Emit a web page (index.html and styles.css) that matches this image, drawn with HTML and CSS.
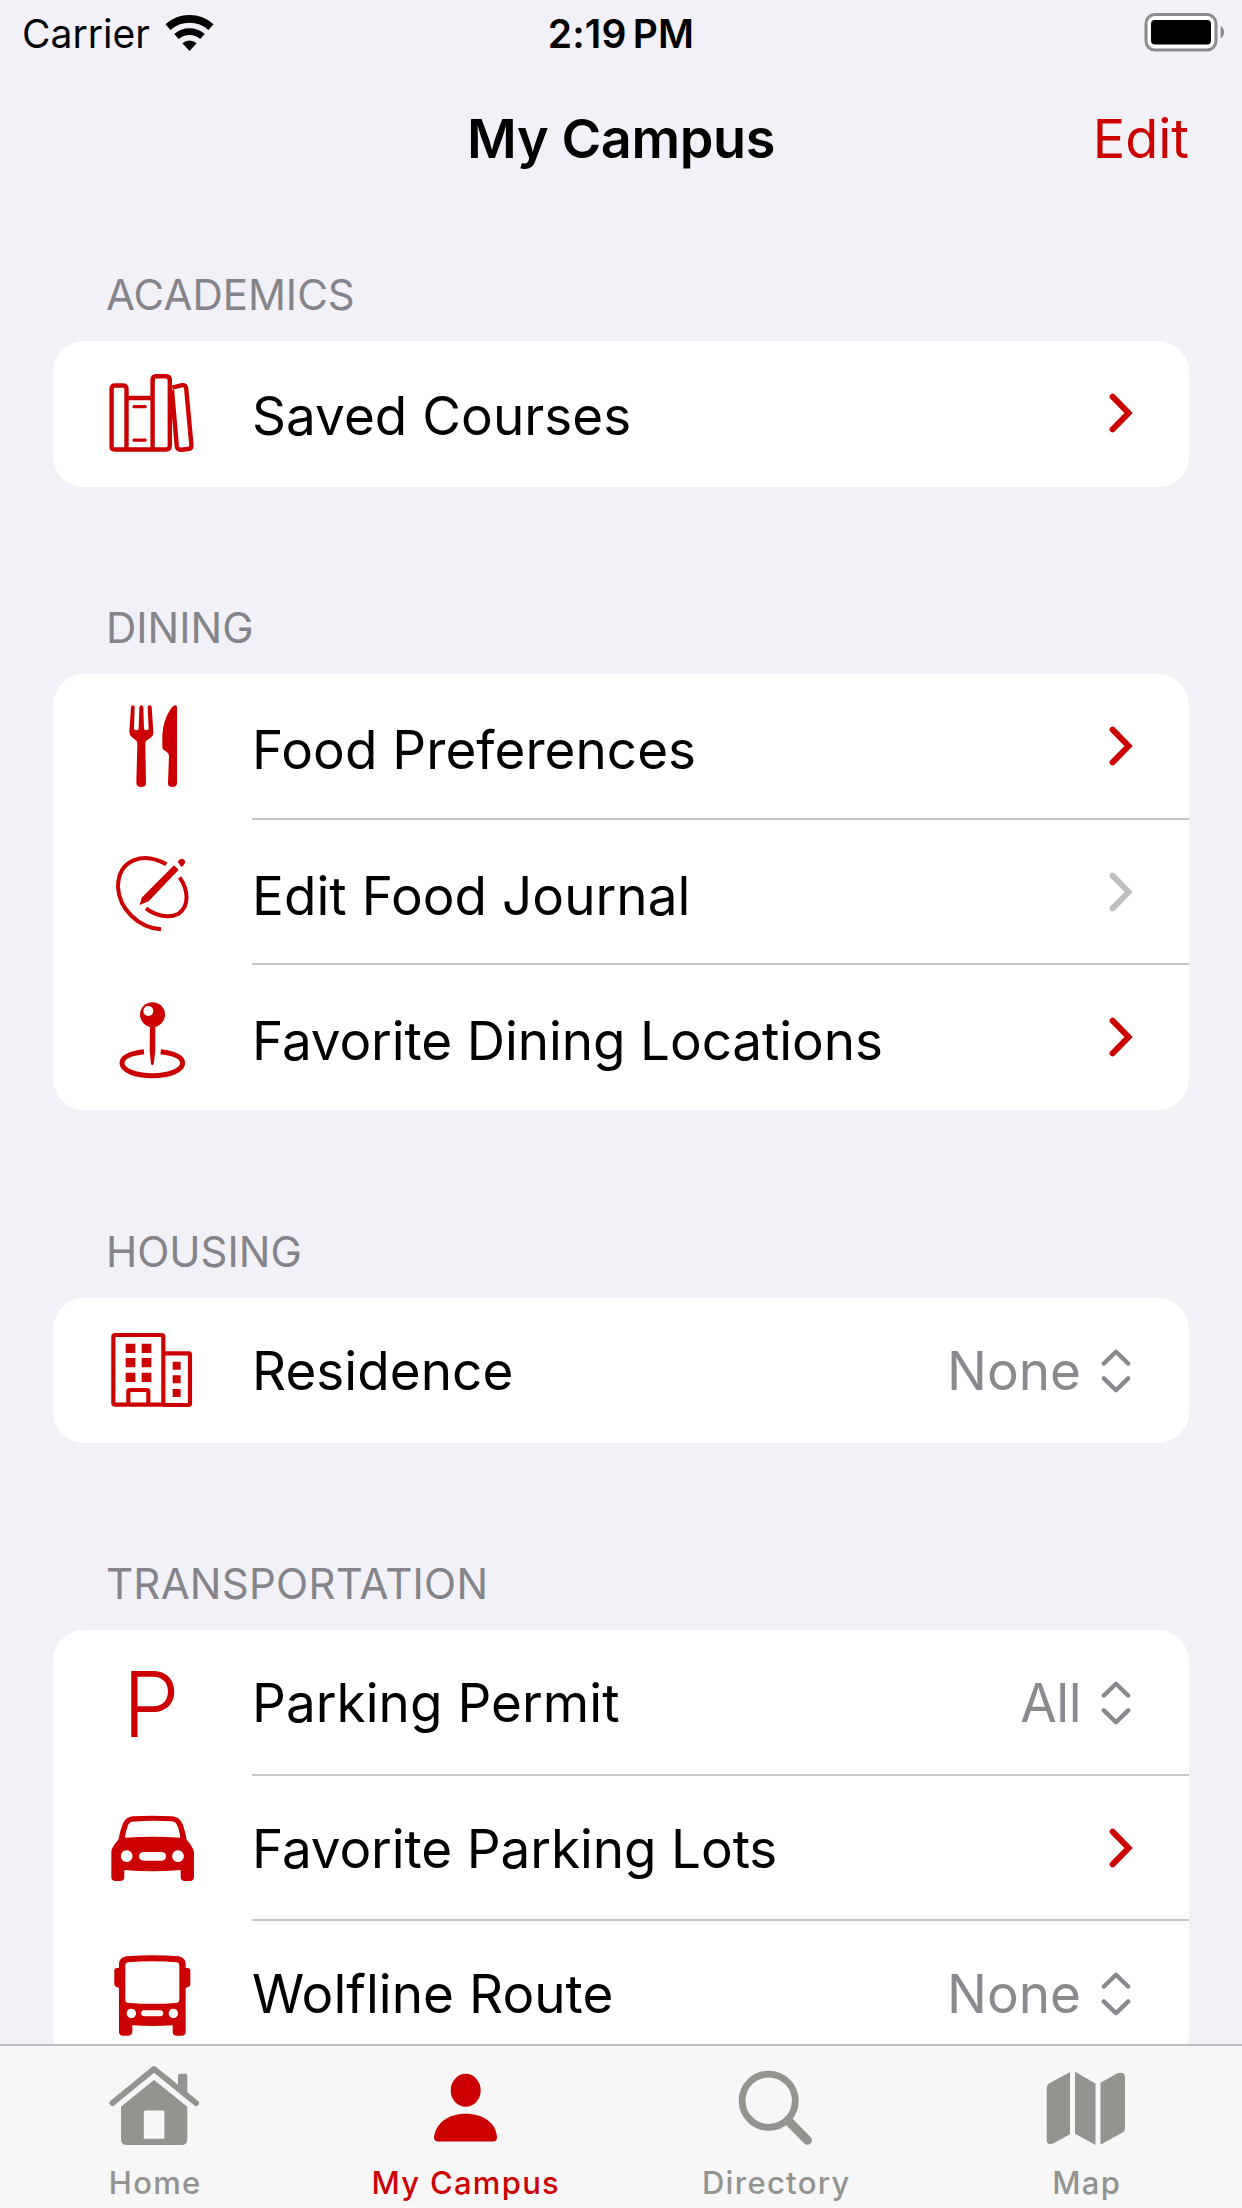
FILE: index.html
```html
<!DOCTYPE html>
<html lang="en">
<head>
<meta charset="utf-8">
<title>My Campus</title>
<link rel="stylesheet" href="styles.css">
</head>
<body>
<svg class="defs" width="0" height="0" aria-hidden="true">
  <symbol id="chevron" viewBox="0 0 24 42"><path d="M3.6 4.6 19.6 21 3.6 37.4" fill="none" stroke="currentColor" stroke-width="6" stroke-linecap="round" stroke-linejoin="miter"/></symbol>
  <symbol id="updown" viewBox="0 0 30 46"><path d="M2.8 15.6 15 3.8l12.200 11.800M2.800 30.400 15 42.200l12.200-11.800" fill="none" stroke="currentColor" stroke-width="4.300" stroke-linecap="round" stroke-linejoin="round"/></symbol>
</svg>
<div class="app">
  <header class="status">
    <div class="status-left">
      <span class="carrier">Carrier</span>
      <svg class="wifi" viewBox="164 14 52 38">
        <g fill="none" stroke="#000"><path d="M168 27.1A32.2 32.2 0 0 1 211 27.1" stroke-width="7.6"/><path d="M176.5 36.5A19.5 19.5 0 0 1 202.5 36.5" stroke-width="6.8"/></g>
        <path d="M182.4 43.3A10.3 10.3 0 0 1 196.6 43.3L189.5 51Z"/>
      </svg>
    </div>
    <time class="clock">2:19 PM</time>
    <svg class="battery" viewBox="1144 12 82 40">
      <rect x="1146" y="14.5" width="70" height="35.5" rx="9" fill="#fff" stroke="#8b8b8e" stroke-width="3"/>
      <rect x="1151" y="20" width="60" height="24.5" rx="4"/>
      <path d="M1220.7 26Q1224 28 1224 32.2T1220.7 38.4Z" fill="#8b8b8e"/>
    </svg>
  </header>
  <nav class="navbar">
    <h1 class="title">My Campus</h1>
    <a class="edit">Edit</a>
  </nav>
  <main class="content">
    <section class="group">
      <h2 class="heading">ACADEMICS</h2>
      <div class="card card-academics">
        <div class="row">
          <svg class="icon" viewBox="108 371 90 90"><g fill="none" stroke="currentColor" stroke-width="4.400">
            <path d="M126.5 449.5H114.5Q111.6 449.5 111.6 446.5V389Q111.6 385.5 115 385.5H123Q126.5 385.5 126.5 389ZM126.5 398H152.6M126.5 449.5H152.6V380.5Q152.6 376.3 156 376.3H166Q169.8 376.3 169.8 380.5V445.5Q169.8 449.5 166 449.5H152.6"/>
            <path d="M172.300 387.6 182 385.2Q185.800 384.8 186.200 388.5L191.400 445Q191.600 448.6 188 449L181 449.8Q177.4 450 176.8 446.5L172 390"/>
            <path d="M134 406.7H145.2M134 440.2H145.2" stroke-width="3.200" stroke-linecap="round"/></g></svg>
          <span class="label">Saved Courses</span><svg class="chevron"><use href="#chevron"/></svg>
        </div>
      </div>
    </section>
    <section class="group">
      <h2 class="heading">DINING</h2>
      <div class="card card-dining">
        <div class="row">
          <svg class="icon" viewBox="204 312 270 270" fill="currentColor">
            <path d="M273 321Q274 316 279 316T284 321L282 386Q284 391 290 391 296 390 296 386L298 321Q299 316 304 316T310 321L312 386Q313 390 319 391 325 391 326 386L323 321Q323 316 329 316T335 321L340 395Q341 406 334 412 324 418 318 423 316 427 316 433L318 548Q318 561 304 561T289 548L292 433Q292 426 290 423L276 412Q268 406 268 396Z"/>
            <path d="M405 316Q411 316 411 322V548Q411 561 397 561T384 548L387 468Q387 461 380 456L369 448Q367 446 367 438V404Q370 364 386 337 396 318 405 316Z"/></svg>
          <span class="label">Food Preferences</span><svg class="chevron"><use href="#chevron"/></svg>
        </div>
        <div class="row divided">
          <svg class="icon" viewBox="204 750 270 270"><g fill="none" stroke="currentColor" stroke-width="12"><path d="M379 793C311 754 234 777 234 862 238 928 296 983 363 988M419 832C447 872 447 919 416 941 382 958 343 944 318 925"/></g>
            <path d="M402 796 416 809 326 904 299 915 305 893Z" fill="currentColor"/><path d="M413 785Q424 769 435 782 438 791 424 801Z" fill="currentColor"/></svg>
          <span class="label">Edit Food Journal</span><svg class="chevron muted"><use href="#chevron"/></svg>
        </div>
        <div class="row divided">
          <svg class="icon" viewBox="204 1185 270 270"><circle cx="337.500" cy="1244" r="37.500" fill="currentColor"/><circle cx="325" cy="1233" r="15" fill="#fff"/>
            <path d="M330 1278H346V1352L341 1392Q337 1400 333 1392L329 1352Z" fill="currentColor"/>
            <path d="M312 1355C270 1360 246 1372 246 1389 246 1411 286 1427 337 1427S428 1411 428 1389C428 1372 404 1360 362 1355" fill="none" stroke="currentColor" stroke-width="15"/></svg>
          <span class="label label-tight">Favorite Dining Locations</span><svg class="chevron"><use href="#chevron"/></svg>
        </div>
      </div>
    </section>
    <section class="group group-housing">
      <h2 class="heading">HOUSING</h2>
      <div class="card card-housing">
        <div class="row picker">
          <svg class="icon" viewBox="204 324 270 270"><g fill="none" stroke="currentColor" stroke-width="12.500"><rect x="220" y="345" width="150" height="209" rx="5"/><path d="M370 400H446Q450 400 450 404V550Q450 555 446 555H370M265 552V514Q265 510 270 510H320Q325 510 325 514V552"/></g>
            <path d="M257 371h29v28h-29zM305 371h29v28h-29zM257 414h29v28h-29zM305 414h29v28h-29zM257 458h29v28h-29zM305 458h29v28h-29zM398 425h24v24h-24zM398 466h24v24h-24zM398 507h24v24h-24z" fill="currentColor"/></svg>
          <span class="label">Residence</span><span class="value">None</span><svg class="updown"><use href="#updown"/></svg>
        </div>
      </div>
    </section>
    <section class="group">
      <h2 class="heading heading-wide">TRANSPORTATION</h2>
      <div class="card card-transport">
        <div class="row picker">
          <span class="icon letter">P</span>
          <span class="label">Parking Permit</span><span class="value value-tight">All</span><svg class="updown"><use href="#updown"/></svg>
        </div>
        <div class="row divided picker">
          <svg class="icon" viewBox="204 798 270 270"><path fill="currentColor" fill-rule="evenodd" d="M278 829Q338 826 396 829 419 830 429 855 436 875 440 899 459 921 462 935V1010Q462 1023 449 1023H435Q422 1023 422 1010V990Q338 998 253 990V1010Q253 1023 240 1023H227Q214 1023 214 1010V935Q214 923 235 899 241 870 249 850 258 831 278 829ZM277 845Q266 847 263 858 257 875 255 893 338 887 421 893 418 868 410 853 406 845 397 844 338 840 277 845ZM260 931a17.500 17.500 0 1 0 .1 0ZM414 931a17.500 17.500 0 1 0 .1 0ZM310 936H366Q378 937 378 949T366 962H310Q297 960 297 949T310 936Z"/></svg>
          <span class="label label-tight">Favorite Parking Lots</span><svg class="chevron"><use href="#chevron"/></svg>
        </div>
        <div class="row divided picker">
          <svg class="icon" viewBox="204 1233 270 270"><path fill="currentColor" fill-rule="evenodd" d="M259 1249Q338 1242 416 1249 437 1254 437 1271V1284H444Q451 1285 451 1291V1334Q450 1340 444 1341L437 1344V1475Q437 1487 425 1487H410Q398 1487 398 1475V1456Q338 1460 277 1456V1475Q276 1487 264 1487H249Q237 1487 237 1475V1344L230 1341Q223 1339 223 1333V1291Q223 1285 230 1284H237V1271Q238 1253 259 1249ZM263 1267Q256 1268 256 1276V1379Q256 1388 264 1388 338 1395 411 1388 418 1387 418 1379V1276Q418 1268 411 1267 338 1260 263 1267ZM274 1406a14 14 0 1 0 .1 0ZM400 1406a14 14 0 1 0 .1 0ZM313 1411H361Q370 1412 370 1420T361 1429H313Q303 1428 303 1420T313 1411Z"/></svg>
          <span class="label">Wolfline Route</span><span class="value">None</span><svg class="updown"><use href="#updown"/></svg>
        </div>
      </div>
    </section>
  </main>
  <footer class="tabbar">
    <a class="tab"><svg class="tab-icon" viewBox="109 2060 92 90"><path d="M112.500 2103 154 2069 196 2103" fill="none" stroke="currentColor" stroke-width="6" stroke-linecap="round" stroke-linejoin="round"/><path d="M178 2087V2075.500Q178 2073.700 180 2073.700H185.500Q187.300 2073.700 187.300 2075.500V2096Z" fill="currentColor"/><path fill="currentColor" fill-rule="evenodd" d="M154 2080 187.300 2106.700V2139Q187.300 2145 181.500 2145H127Q121 2145 121 2139V2106.700ZM145.500 2110.500Q143.800 2110.500 143.800 2112V2138.700H164.400V2112Q164.400 2110.500 163 2110.500Z"/></svg><span class="tab-label">Home</span></a>
    <a class="tab active"><svg class="tab-icon" viewBox="420 2060 92 90" fill="currentColor"><ellipse cx="465.700" cy="2090.300" rx="15" ry="16.500"/><path d="M434 2137C436 2123 448 2113.700 465.700 2113.700S496 2123 497 2137Q497 2141.500 493 2141.500H438Q434 2141.500 434 2137Z"/></svg><span class="tab-label">My Campus</span></a>
    <a class="tab"><svg class="tab-icon" viewBox="730 2060 92 90" fill="none" stroke="currentColor"><circle cx="768.700" cy="2100.700" r="26.600" stroke-width="6.800"/><path d="M788 2120.500 807.500 2140.300" stroke-width="9" stroke-linecap="round"/></svg><span class="tab-label">Directory</span></a>
    <a class="tab"><svg class="tab-icon" viewBox="1041 2060 92 90" fill="currentColor"><path d="M1070 2072V2134.300L1054 2143Q1047 2146 1046.700 2140V2087Q1047 2084.500 1049 2083.500ZM1075 2071.700 1095.500 2083.500V2145L1075 2133.700ZM1100.500 2082.700 1118 2073Q1124.800 2071.500 1125 2077V2128Q1125 2131 1123 2132.300L1100.500 2144.700Z"/></svg><span class="tab-label">Map</span></a>
  </footer>
</div>
</body>
</html>
```
FILE: styles.css
```css
* { box-sizing: border-box; }

body {
  margin: 0;
  background: #f2f1f7;
  color: #000;
  font-family: Inter, "Liberation Sans", sans-serif;
}

.defs { display: block; }

.app {
  display: flex;
  flex-direction: column;
  height: 2208px;
  overflow: hidden;
}

.status {
  display: grid;
  grid-template-columns: 1fr auto 1fr;
  height: 64px;
  padding: 0 16px;
  font-size: 39px;
  line-height: 48px;
}

.status-left { display: flex; padding: 10px 0 0 6px; }
.carrier { width: 142px; white-space: nowrap; }
.wifi { width: 52px; height: 38px; margin-top: 4px; }

.clock {
  padding-top: 10px;
  font-weight: 600;
  letter-spacing: 0.2px;
  word-spacing: -4px;
  white-space: nowrap;
}

.battery { width: 82px; height: 40px; margin-top: 12px; justify-self: end; }

.navbar {
  display: grid;
  grid-template-columns: 1fr auto 1fr;
  height: 206px;
  padding: 42px 53px 0;
  font-size: 54px;
  line-height: 66px;
}

.title {
  grid-column: 2;
  margin: 0;
  font-size: 54px;
  font-weight: 600;
  letter-spacing: -0.4px;
}

.edit { justify-self: end; color: #c00; }

.content {
  display: flex;
  flex: 1;
  flex-direction: column;
  gap: 116px;
  min-height: 0;
  padding: 0 53px;
  overflow: hidden;
}

.group { flex: none; }
.group-housing { margin-top: 1px; }

.heading {
  margin: 0 0 21px;
  padding-left: 53px;
  color: #85848a;
  font-size: 42px;
  font-weight: 400;
  line-height: 50px;
}

.heading-wide { letter-spacing: 0.25px; }

.card {
  display: grid;
  overflow: hidden;
  border-radius: 31px;
  background: #fff;
}

.card-academics { grid-template-rows: 146px; }
.card-dining { grid-template-rows: 144px 145px 147px; }
.card-housing { grid-template-rows: 145px; }
.card-transport { grid-template-rows: 144px 145px 147px; }

.row {
  display: flex;
  align-items: flex-start;
  padding-left: 55px;
  padding-right: 56px;
}

.divided {
  background: linear-gradient(#c6c6c8, #c6c6c8) 199px 0 / 100% 2px no-repeat;
  padding-top: 2px;
}

.icon { flex: none; width: 90px; height: 90px; margin-top: 30px; color: #c00; }

.letter {
  margin-top: 29px;
  padding-right: 4px;
  font-size: 91px;
  font-weight: 350;
  line-height: 90px;
  text-align: center;
}

.label {
  flex: 1;
  margin: 43px 0 0 54px;
  font-size: 53px;
  line-height: 64px;
  letter-spacing: 0.05px;
  white-space: nowrap;
}

.card-dining .label { margin-top: 44px; }
.picker .label { margin-top: 41px; }
.label-tight { letter-spacing: -0.1px; }

.value {
  margin: 41px 20px 0 0;
  color: #8a8a8e;
  font-size: 53px;
  line-height: 64px;
}

.value-tight { letter-spacing: -0.5px; }

.chevron { flex: none; width: 24px; height: 42px; margin-top: 51px; color: #c00; }
.muted { color: #bfbfbf; }
.updown { flex: none; width: 30px; height: 46px; margin: 50px 2px 0 0; color: #8a8a8e; }

.tabbar {
  display: grid;
  flex: none;
  grid-template-columns: repeat(4, 1fr);
  height: 164px;
  border-top: 2px solid #bdbdbe;
  background: #f7f7f7;
}

.tab {
  display: flex;
  flex-direction: column;
  align-items: center;
  padding-top: 14px;
  color: #939390;
}

.active { color: #c00; }
.tab-icon { flex: none; width: 92px; height: 90px; }

.tab-label {
  margin-top: 14px;
  font-size: 31px;
  font-weight: 500;
  line-height: 38px;
  letter-spacing: 1.3px;
}
```
